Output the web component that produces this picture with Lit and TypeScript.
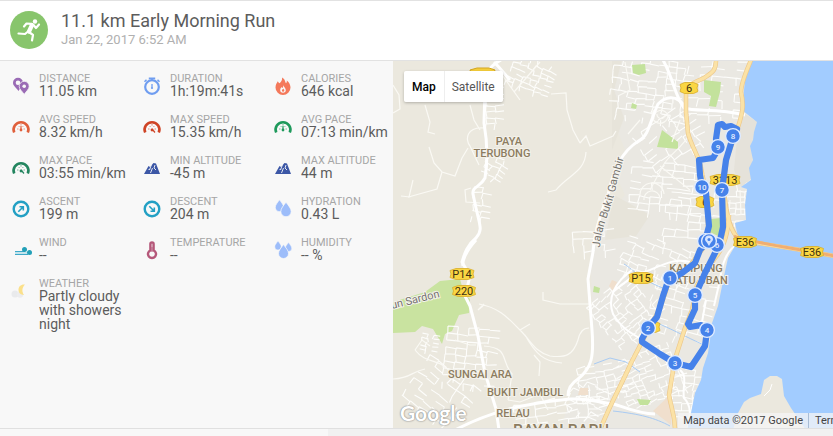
import { LitElement, html, svg, css } from "lit";
import { customElement } from "lit/decorators.js";

const gauge = (color: string, needle: string) => svg`
  <path d="M2.200 14.500A7.400 7.400 0 1 1 15.800 14.500" fill="none" stroke=${color} stroke-width="2.600"/>
  <path d="M5.400 11h.9M11.700 11h.9M6.600 8l.6.6M11.400 8l-.6.6M9 6.400v1" stroke=${color} stroke-width="1"/>
  <path d=${needle} stroke=${color} stroke-width="1.200" fill="none"/><circle cx="9" cy="12" r="1.400" fill=${color}/>`;

const drop = (x: number, y: number, r: number) => svg`
  <path transform="translate(${x} ${y}) scale(${r})" fill="#9dbdfa" stroke="#f8f8f8" stroke-width=".15"
    d="M0-1.700C.5-1 1-.5 1 .1A1 1 0 0 1-1 .1C-1-.5-.5-1 0-1.700Z"/>`;

const peaks = svg`
  <path d="M1 15 5.500 7l1.500 1L10.500 4 13 4.500 17 15Z" fill="#3c57a6"/>
  <path d="M8.500 5.500 6.500 11l-1-1M7.500 14l2-5M12 6l-1 3 2 2" fill="none" stroke="#f8f8f8" stroke-width=".9"/>`;

const compass = (d: string) => svg`
  <circle cx="9" cy="9" r="7.300" fill="none" stroke="#23a0c4" stroke-width="2.400"/>
  <path d=${d} fill="none" stroke="#23a0c4" stroke-width="1.600"/>`;

const icons = {
  distance: svg`
    <path d="M6 .8a5 5 0 0 1 5 5C11 9 8.500 10.500 6.500 14 4.200 10.500 1 9 1 5.800a5 5 0 0 1 5-5Z" fill="#9a6bb5"/>
    <circle cx="6" cy="5.800" r="2.300" fill="#f8f8f8"/>
    <path d="M12.200 4.300a5 5 0 0 1 5 5c0 3.200-3 4.800-5 8.200-2-3.400-5-5-5-8.200a5 5 0 0 1 5-5Z" fill="#9a6bb5" stroke="#f8f8f8" stroke-width=".8"/>
    <circle cx="12.200" cy="9.200" r="1.800" fill="#f8f8f8"/>`,
  duration: svg`
    <circle cx="9" cy="10" r="6.800" fill="none" stroke="#6f9df0" stroke-width="2.200"/>
    <path d="M5.800 1.200h6.400M9 1v2.500M14.500 2.700l2 2M3.500 2.700l-2 2" stroke="#6f9df0" stroke-width="1.500"/>
    <path d="M9 7v3.500" stroke="#6f9df0" stroke-width="1.300"/><circle cx="9" cy="11" r="1.100" fill="#6f9df0"/>`,
  calories: svg`
    <path d="M8 .5c3.500 2 3 4.500 4 5.700.700-.6 1-1.500.8-2.700 2.500 2 3.700 4.500 3.700 7A7.300 7.300 0 0 1 1.500 10.500C1.500 7.500 3 6 3.800 4.300c.5 1 1 1.700 1.700 2C7.500 4.500 8.500 2.500 8 .5Z" fill="#f4795b"/>
    <path d="M9.200 8c.5 2 2.600 3 2.600 5a2.800 2.800 0 0 1-5.600 0c0-1.400.8-2 1.400-3 .4.7.7.9 1 1C9.100 10 9.500 9 9.200 8Z" fill="#f8f8f8"/>
    <path d="M9.200 11.500c.8 1 1.100 1.300 1.100 2a1.200 1.200 0 0 1-2.400 0c0-.7.800-1 1.300-2Z" fill="#f4795b"/>`,
  avgSpeed: gauge("#e0603c", "M9 12V8"),
  maxSpeed: gauge("#cf4426", "M9 11l3 3.500"),
  avgPace: gauge("#1f9a5c", "M9 12V8"),
  maxPace: gauge("#23855f", "M9 11l3 3.500"),
  peaks,
  ascent: compass("M6.300 11.700 11 7M7.500 6.700h3.800v3.800"),
  descent: compass("M6.300 6.300 11 11M7.500 11.300h3.800V7.500"),
  hydration: svg`${drop(5.500, 7, 4.200)}${drop(12, 11, 5.200)}`,
  wind: svg`
    <path d="M3 10.500h10M3 13.500h13" stroke="#3fa9c9" stroke-width="1.200"/>
    <circle cx="12.500" cy="8.500" r="2.500" fill="#23a0b8"/><circle cx="17.500" cy="11.500" r="2.500" fill="#23a0b8"/>
    <path d="M3 12h12" stroke="#8fd0e0" stroke-width="1"/>`,
  temperature: svg`
    <path d="M7.400 9.300V3a1.600 1.600 0 0 1 3.200 0v6.300a4 4 0 1 1-3.200 0Z" fill="none" stroke="#b5587a" stroke-width="2.400"/>
    <path d="M9 6v5" stroke="#b5587a" stroke-width="1"/>`,
  humidity: svg`${drop(4, 5.500, 3.200)}${drop(14.500, 7, 3.200)}${drop(9.500, 12, 5)}`,
  weather: svg`
    <circle cx="3" cy="12" r="3.500" fill="#e9eaec"/><circle cx="8" cy="12.500" r="3.200" fill="#ececee"/>
    <path d="M13 2.500C9 2 6.500 4.500 6.500 7.800c0 3 2 5.200 5.500 5.200-2.200-3.200-2.300-7 1-10.500Z" fill="#fbe08a"/>`,
};

const stats: [keyof typeof icons, string, string][] = [
  ["distance", "DISTANCE", "11.05 km"],
  ["duration", "DURATION", "1h:19m:41s"],
  ["calories", "CALORIES", "646 kcal"],
  ["avgSpeed", "AVG SPEED", "8.32 km/h"],
  ["maxSpeed", "MAX SPEED", "15.35 km/h"],
  ["avgPace", "AVG PACE", "07:13 min/km"],
  ["maxPace", "MAX PACE", "03:55 min/km"],
  ["peaks", "MIN ALTITUDE", "-45 m"],
  ["peaks", "MAX ALTITUDE", "44 m"],
  ["ascent", "ASCENT", "199 m"],
  ["descent", "DESCENT", "204 m"],
  ["hydration", "HYDRATION", "0.43 L"],
  ["wind", "WIND", "--"],
  ["temperature", "TEMPERATURE", "--"],
  ["humidity", "HUMIDITY", "-- %"],
  ["weather", "WEATHER", "Partly cloudy with showers night"],
];

/* Local streets: each district is a rotated block grid with gaps. */
const districts = [
  { x: 648, y: 88, w: 74, h: 60, angle: 8, step: 6 },
  { x: 712, y: 90, w: 50, h: 60, angle: 5, step: 8 },
  { x: 668, y: 140, w: 56, h: 44, angle: -35, step: 7 },
  { x: 662, y: 188, w: 64, h: 50, angle: 6, step: 7 },
  { x: 736, y: 200, w: 18, h: 42, angle: 2, step: 6 },
  { x: 690, y: 215, w: 50, h: 50, angle: 4, step: 8 },
  { x: 590, y: 242, w: 34, h: 22, angle: -4, step: 7 },
  { x: 655, y: 262, w: 66, h: 44, angle: 20, step: 6 },
  { x: 625, y: 312, w: 54, h: 56, angle: -40, step: 5 },
  { x: 678, y: 310, w: 56, h: 60, angle: 14, step: 7 },
  { x: 650, y: 376, w: 64, h: 50, angle: -22, step: 5 },
  { x: 684, y: 395, w: 24, h: 52, angle: 6, step: 7 },
  { x: 602, y: 382, w: 46, h: 34, angle: -10, step: 6 },
  { x: 560, y: 412, w: 90, h: 26, angle: -8, step: 7 },
  { x: 438, y: 392, w: 56, h: 52, angle: 35, step: 7 },
  { x: 466, y: 356, w: 42, h: 56, angle: 6, step: 7 },
  { x: 427, y: 342, w: 12, h: 16, angle: 10, step: 4 },
  { x: 530, y: 74, w: 40, h: 30, angle: 22, step: 5 },
  { x: 494, y: 108, w: 16, h: 40, angle: 0, step: 6 },
  { x: 492, y: 168, w: 16, h: 24, angle: 30, step: 5 },
  { x: 480, y: 204, w: 14, h: 34, angle: 5, step: 6 },
  { x: 585, y: 398, w: 30, h: 30, angle: 30, step: 6 },
];

function streets(): string {
  let seed = 7;
  const rnd = () => (seed = (seed * 16807) % 2147483647) / 2147483647;
  const out: string[] = [];
  for (const d of districts) {
    const a = (d.angle * Math.PI) / 180;
    const at = (u: number, v: number) =>
      `${(d.x + u * Math.cos(a) - v * Math.sin(a)).toFixed(1)} ${(d.y + u * Math.sin(a) + v * Math.cos(a)).toFixed(1)}`;
    for (let v = -d.h / 2; v <= d.h / 2; v += d.step)
      for (let u = -d.w / 2; u <= d.w / 2; u += d.step * 1.5) {
        if (rnd() < 0.68) out.push(`M${at(u, v)}L${at(u + d.step * 1.5, v + (rnd() - 0.5) * 3)}`);
        if (rnd() < 0.55) out.push(`M${at(u, v)}L${at(u + (rnd() - 0.5) * 3, v + d.step)}`);
      }
  }
  return out.join("");
}

const coast =
  "M751 60 745 80 742 110 757 122 754 132 753 140 750 146 753 160 749 168 751 180 741 187 747 189 745 205 746 220 735 223 738 237 735 246 728 258 724 276 718 306 711 326 710 340 708 353 703 368 701 380 695 393 691 413 687 430H834V60Z";

const yellowRoads = [
  "M716 60C716 72 711 73 704 78 694 83 687 84 686 95L686 112 688 133C691 146 700 158 701 168L706 193 709 240",
  "M751 60C746 72 741 83 741 92 744 104 743 112 738 127L727 158 722 195",
  "M724 190C726 215 730 232 740 240 760 244 800 249 834 256",
  "M729 215C728 238 722 250 715 258L697 285 692 310 685 328 675 359 669 395C671 408 675 414 675 430",
  "M708 242 688 268 671 276 660 308 645 336 631 363C622 384 610 404 600 430",
];

const whiteRoads = [
  "M501 60C486 68 485 76 485 88L484 123C487 140 488 160 485 178 480 188 472 186 473 194L476 208C480 226 483 230 476 238 466 246 464 256 462 262L470 276 465 296 470 306 478 336 485 373 496 409 499 430",
  "M663 60C674 80 674 94 684 108 696 112 716 108 745 115",
  "M686 108C676 92 664 98 658 104 650 122 648 136 640 140 620 152 613 172 608 195 598 220 594 236 593 252L588 279 592 330C594 356 592 368 578 379 570 384 568 390 568 396",
  "M455 430C490 412 520 404 570 399 590 398 600 403 614 404 626 408 640 414 655 414",
  "M476 240C465 252 462 262 463 266M494 62C502 70 506 76 510 80",
];

const avenues =
  "M632 270C615 282 607 298 613 314 622 330 634 334 642 340M690 262C676 258 664 264 650 270 636 274 624 282 613 292M680 370C688 376 682 388 684 398 692 406 690 416 688 428M706 300 702 322M735 246C728 250 722 262 720 280L714 306";

const trails =
  "M393 85 399 95 400 109 393 113M425 105 430 122 428 132 435 134M470 105 474 120 480 130M551 94 566 93 567 110 573 130 580 143M580 143 586 136 590 146 613 136 616 131M586 152C585 172 568 175 556 190L548 192M429 147 434 163 442 172 455 176 462 158 468 148M442 172 437 189 412 196 409 197 413 180M401 196 410 197M485 128C466 126 465 140 470 146L479 165M471 188 465 190 466 202 480 203M479 304C500 308 508 318 520 330 532 342 535 352 550 356 566 358 573 355 578 340 580 330 585 328 589 328M525 335C536 355 545 362 562 363M520 330 530 324M534 355 540 362 539 376M483 306 478 310 484 304M415 350 422 340 430 346M415 350C424 362 436 360 444 366L460 380M393 379C412 378 410 372 425 369M484 346C510 348 500 360 512 374L508 400M508 400 520 402 540 394 548 410M543 292 543 300 560 304 590 304M654 110a8 8 0 1 0 14 6a7 7 0 1 0-14 3M657 114a4 4 0 1 0 8 1M640 196a12 12 0 0 1 24-2M644 200a8 8 0 0 1 16-2M640 120 628 134M625 62 630 90 618 96M690 134C680 150 672 152 664 164L650 190M660 166 690 190M680 120 672 142M730 200 727 236M740 190 741 215M455 340 470 345 476 345M500 72 520 100M514 92 540 62";

const route =
  "M705 241 709 226 706 193 702 187 700 175 699 160 713 158 719 148 716 139 718 125 722 124 725 127 731 126 737 129 733 137 726 160 722 190 723 227 719 245 705 273 695 296 695 309 688 324 690 327 701 325 707 331 705 346 691 367 675 363 660 354 642 342 642 339 648 328 657 317 663 296 668 281 682 273 695 263 700 250 708 241";

const shields: [string, number, number, number][] = [
  ["6", 689, 88, 18],
  ["6", 705, 202, 18],
  ["3113", 725, 180, 30],
  ["E36", 745, 242, 23],
  ["E36", 812, 252, 23],
  ["P15", 641, 278, 24],
  ["P14", 462, 274, 24],
  ["220", 464, 291, 23],
  ["", 651, 327, 18],
];

const markers: [string, number, number][] = [
  ["8", 733, 136],
  ["9", 718, 147],
  ["10", 702, 187],
  ["7", 722, 190],
  ["6", 717, 245],
  ["", 705, 241],
  ["5", 695, 295],
  ["1", 670, 278],
  ["2", 648, 328],
  ["3", 675, 363],
  ["4", 707, 330],
];

@customElement("route-map")
export class RouteMap extends LitElement {
  static styles = css`
    :host { display: block; position: relative; overflow: hidden; background: #ebe8de; font-family: Roboto, sans-serif; }
    .canvas { position: absolute; inset: 0; width: 100%; height: 100%; }
    .town { fill: #8c7c60; font-size: 11px; font-weight: 500; text-anchor: middle; stroke: #f3f1ea; stroke-width: 2px; paint-order: stroke; }
    .city { font-size: 16px; }
    .road { fill: #75746f; font-size: 11px; stroke: #f5f3ee; stroke-width: 2px; paint-order: stroke; text-anchor: middle; }
    .code { fill: #3e3210; font-size: 11px; text-anchor: middle; }
    .km { fill: #e6efff; font-size: 8px; font-weight: 500; text-anchor: middle; }
    .types { position: absolute; left: 11px; top: 10px; display: flex; border-radius: 2px; overflow: hidden; box-shadow: 0 1px 3px rgba(0, 0, 0, 0.25); }
    .type { height: 31px; padding: 0 8px; border: 0; background: #fff; color: #565656; font: 12px Roboto, sans-serif; }
    .type.on { color: #000; font-weight: 500; }
    .type + .type { padding-left: 7px; border-left: 1px solid #eee; }
    .brand { position: absolute; left: 7px; bottom: 3px; font: 700 21px/24px Lato, sans-serif; color: #fff; text-decoration: none; text-shadow: 0 0 2px #888, 0 0 1px #888; }
    .credits { position: absolute; right: 0; bottom: 0; display: flex; height: 15px; font-size: 11px; line-height: 15px; color: #444; background: rgba(245, 245, 245, 0.75); }
    .credit { padding: 0 5px; white-space: nowrap; }
    .terms { width: 18px; overflow: hidden; white-space: nowrap; border-left: 1px solid #a9bdd6; padding-left: 6px; color: #444; text-decoration: none; }
  `;

  render() {
    return html`
      <svg class="canvas" viewBox="393 61 440 367" preserveAspectRatio="xMinYMin slice" role="img" aria-label="Route map">
        <rect x="393" y="60" width="440" height="370" fill="#ebe8de"/>
        <path d="M613 60H760V430H560L575 385 594 370 590 240 606 215 625 195 613 170 625 150 613 120Z" fill="#eae8e2"/>
        <path d="M612 60H622L614 90 624 118 612 150ZM614 195 650 215 636 236 605 240Z" fill="#e7e4da"/>
        <path d="M393 302 425 292 440 281 460 279 464 294 470 299 469 313 459 315 452 331 445 334 442 344 433 329 422 326 415 332 393 333Z" fill="#c9e3a0"/>
        <path d=${streets()} stroke="#fdfdfb" stroke-width="1.100" fill="none"/>
        <path d="M632 65 645 64 646 73 639 75 633 73ZM704 80 721 82 720 92 716 107 709 106 711 96 704 92ZM662 130 678 142 678 149 657 147ZM632 103 637 105 636 109 631 108ZM710 219 721 218 720 237 710 232ZM594 286 600 288 599 293 593 292ZM637 399 651 400 648 405 640 405Z" fill="#c3e29c"/>
        <path d="M653 411 669 396 672 412 671 425 662 418ZM580 388 588 388 588 395 578 395ZM612 280 617 282 614 292 609 286Z" fill="#f0dfcd"/>
        <path d="M742 112 757 122 753 140 752 178 741 187 734 170 738 128Z" fill="#e5e2da"/>
        <path d=${trails} stroke="#faf9f4" stroke-width="1.200" fill="none"/>
        <path d="M624 264C634 270 640 280 668 290M650 320C670 328 684 336 706 346M594 364 610 358 626 362 640 372M613 411C640 414 655 418 670 426" stroke="#a9cbf3" stroke-width="1" fill="none"/>
        <path d=${avenues} stroke="#fff" stroke-width="2" fill="none"/>
        ${whiteRoads.map((d) => svg`<path d=${d} stroke="#fff" stroke-width="3" fill="none" stroke-linejoin="round"/>`)}
        <path d=${coast} fill="#a2ccff"/>
        <path d="M733 430 738 413 744 402 750 398 761 394 764 380 770 376 777 376 782 379 784 396 791 408 806 430Z" fill="#ebe8de"/>
        <path d="M772 384 770 390 764 396" stroke="#fff" stroke-width="1" fill="none"/>
        ${yellowRoads.map((d) => svg`<path d=${d} stroke="#edc88a" stroke-width="4.500" fill="none"/>`)}
        ${yellowRoads.map((d) => svg`<path d=${d} stroke="#fbe2a6" stroke-width="3.200" fill="none"/>`)}
        <path d="M734 236C746 242 800 249 834 256" stroke="#f0ae72" stroke-width="3" fill="none"/>
        <path id="gambir" d="M600 248C600 228 612 210 617 182L624 158" fill="none"/>
        <text class="road"><textPath href="#gambir" startOffset="50%">Jalan Bukit Gambir</textPath></text>
        <text class="road" transform="translate(416 303) rotate(-14)">un Sardon</text>
        <path d="M470 70 477 68H489L495 70 493 76H472Z" fill="#f6cf3c" stroke="#d3a51f"/>
        ${shields.map(([code, x, y, w]) => svg`
          <path transform="translate(${x} ${y})" fill="#fad643" stroke="#d8ad28" stroke-width=".8"
            d="M${-w / 2}-3.500 ${-w / 4}-5.500H${w / 4}L${w / 2}-3.500 ${w / 2 - 1} 0 ${w / 2} 3.500 ${w / 4} 5.500H${-w / 4}L${-w / 2} 3.500 ${1 - w / 2} 0Z"/>
          <text class="code" x=${x} y=${y + 4}>${code}</text>`)}
        <text class="town" x="509" y="145">PAYA</text>
        <text class="town" x="502" y="157">TERUBONG</text>
        <text class="town" x="480" y="378">SUNGAI ARA</text>
        <text class="town" x="525" y="396">BUKIT JAMBUL</text>
        <text class="town" x="513" y="417">RELAU</text>
        <text class="town" x="696" y="272">KAMPUNG</text>
        <text class="town" x="698" y="284">BATU UBAN</text>
        <text class="town city" x="561" y="436">BAYAN BARU</text>
        <path d=${route} fill="none" stroke="#4682ea" stroke-width="6.200" stroke-linejoin="round" stroke-linecap="round"/>
        ${markers.map(([km, x, y]) => svg`
          <circle cx=${x} cy=${y} r="7.400" fill="#4682ea" stroke="#dfebff" stroke-width="1.400"/>
          <text class="km" x=${x} y=${y + 3}>${km}</text>`)}
        <circle cx="709" cy="241" r="7.400" fill="#4682ea" stroke="#dfebff" stroke-width="1.400"/>
        <path d="M709 246C707 242 705 241 705 239.500A4 4 0 0 1 713 239.500C713 241 711 242 709 246Z" fill="#d5e4ff"/>
        <circle cx="709" cy="239.500" r="1.500" fill="#4682ea"/>
      </svg>
      <div class="types">
        <button class="type on" type="button">Map</button>
        <button class="type" type="button">Satellite</button>
      </div>
      <a class="brand" href="#">Google</a>
      <div class="credits">
        <span class="credit">Map data ©2017 Google</span>
        <a class="terms" href="#">Terms of Use</a>
      </div>
    `;
  }
}

@customElement("app-root")
export class AppRoot extends LitElement {
  static styles = css`
    :host { display: flex; flex-direction: column; min-height: 100vh; background: #f8f8f8; font-family: Roboto, sans-serif; color: #5c5c5c; }
    * { box-sizing: border-box; }
    .head { display: flex; gap: 13px; padding: 10px; background: #fff; border-top: 1px solid #e2e2e2; border-bottom: 1px solid #e2e2e2; }
    .badge { width: 38px; height: 38px; margin-bottom: 1px; flex: none; }
    .title { margin: 0; font-size: 18px; line-height: 20px; font-weight: 400; color: #5c5c5c; }
    .date { margin: 0; font-size: 13px; line-height: 18px; color: #b0b0b0; }
    .main { flex: 1; display: grid; grid-template-columns: 393fr 440fr; }
    .stats { margin: 0; padding: 12px 0; display: grid; grid-template-columns: repeat(3, 1fr); row-gap: 16px; align-content: start; }
    .stat { display: grid; grid-template-columns: 18px 1fr; column-gap: 9px; padding-left: 12px; }
    .icon { width: 18px; height: 18px; margin-top: 4px; grid-row: 1 / 3; overflow: visible; }
    .label { font-size: 11px; line-height: 11px; color: #a6a6a6; white-space: nowrap; }
    .value { margin: 0; font-size: 14px; line-height: 14px; white-space: nowrap; }
    .wrap { white-space: normal; }
    .foot { height: 8px; border-top: 1px solid #e0e0e0; display: grid; grid-template-columns: 328fr 505fr; }
    .tail { grid-column: 2; background: #f1f1f1; }
  `;

  render() {
    return html`
      <header class="head">
        <svg class="badge" viewBox="0 0 38 38" aria-hidden="true">
          <circle cx="19" cy="19" r="19" fill="#88c56c"/>
          <circle cx="25" cy="10.500" r="2.200" fill="#fff"/>
          <path d="M22 14 19 20.500" stroke="#fff" stroke-width="4.200" stroke-linecap="round"/>
          <path d="M21 12.800 16.500 12.500 14 15.500M23.500 14 26 17 29 13.500M19 21 23 24 22 29.500M18 20.500 15 23 8.500 22.500" fill="none" stroke="#fff" stroke-width="2.200" stroke-linecap="round" stroke-linejoin="round"/>
        </svg>
        <div>
          <h1 class="title">11.1 km Early Morning Run</h1>
          <p class="date">Jan 22, 2017 6:52 AM</p>
        </div>
      </header>
      <main class="main">
        <dl class="stats">
          ${stats.map(([icon, label, value]) => html`
            <div class="stat">
              <svg class="icon" viewBox="0 0 18 18" aria-hidden="true">${icons[icon]}</svg>
              <dt class="label">${label}</dt>
              <dd class="value ${value.length > 14 ? "wrap" : ""}">${value}</dd>
            </div>`)}
        </dl>
        <route-map></route-map>
      </main>
      <footer class="foot"><div class="tail"></div></footer>
    `;
  }
}
